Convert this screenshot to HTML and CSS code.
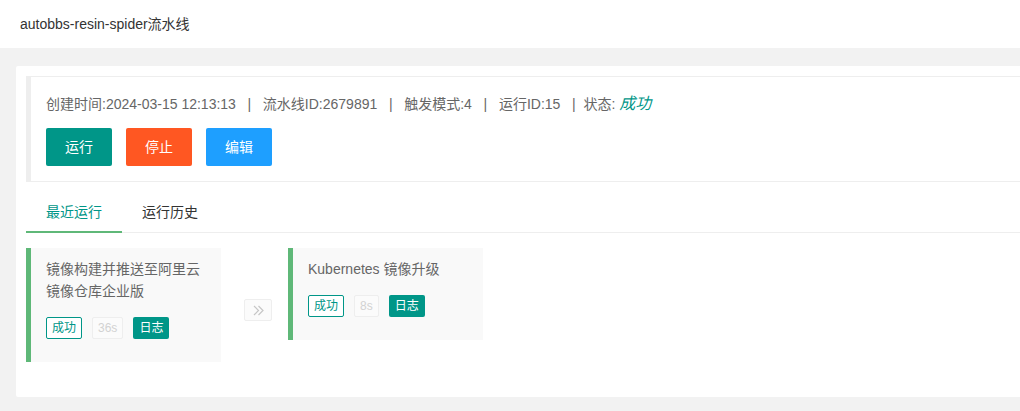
FILE: index.html
```html
<!DOCTYPE html>
<html lang="zh-CN">
<head>
<meta charset="utf-8">
<title>autobbs-resin-spider流水线</title>
<link rel="stylesheet" href="styles.css">
</head>
<body>
<div class="header">autobbs-resin-spider流水线</div>
<div class="main">
  <div class="card">
    <div class="quote">
      <div class="info">创建时间:2024-03-15 12:13:13&nbsp;&nbsp;&nbsp;|&nbsp;&nbsp;&nbsp;流水线ID:2679891&nbsp;&nbsp;&nbsp;|&nbsp;&nbsp;&nbsp;触发模式:4&nbsp;&nbsp;&nbsp;|&nbsp;&nbsp;&nbsp;运行ID:15&nbsp;&nbsp;&nbsp;|&nbsp;&nbsp;状态: <em class="status">成功</em></div>
      <div class="actions">
        <button class="btn btn-run">运行</button>
        <button class="btn btn-stop">停止</button>
        <button class="btn btn-edit">编辑</button>
      </div>
    </div>
    <div class="tab">
      <ul class="tab-title">
        <li class="active">最近运行</li>
        <li>运行历史</li>
      </ul>
      <div class="tab-content">
        <div class="stage">
          <div class="stage-name">镜像构建并推送至阿里云镜像仓库企业版</div>
          <div class="tags">
            <span class="tag tag-ok">成功</span>
            <span class="tag tag-time">36s</span>
            <span class="tag tag-log">日志</span>
          </div>
        </div>
        <div class="arrow">
          <svg width="11" height="11" viewBox="0 0 11 11"><polyline points="1,1 5.5,5.5 1,10" fill="none" stroke="#c6c6c6" stroke-width="1.2"/><polyline points="5.5,1 10,5.5 5.5,10" fill="none" stroke="#c6c6c6" stroke-width="1.2"/></svg>
        </div>
        <div class="stage">
          <div class="stage-name">Kubernetes 镜像升级</div>
          <div class="tags">
            <span class="tag tag-ok">成功</span>
            <span class="tag tag-time">8s</span>
            <span class="tag tag-log">日志</span>
          </div>
        </div>
      </div>
    </div>
  </div>
</div>
</body>
</html>
```
FILE: styles.css
```css
html, body {
  margin: 0;
  padding: 0;
  overflow: hidden;
  background: #f2f2f2;
}
body {
  font-family: "Liberation Sans", "Noto Sans CJK SC", sans-serif;
  font-size: 14px;
  color: #666;
}
.header {
  height: 48px;
  line-height: 48px;
  padding-left: 20px;
  background: #fff;
  color: #333;
}
.main {
  padding: 18px 0 14px 16px;
  overflow: hidden;
}
.card {
  background: #fff;
  border-radius: 2px;
  padding: 10px;
  margin-right: -40px;
}
.quote {
  border: 1px solid #eee;
  border-left-width: 5px;
  padding: 15px;
}
.info {
  line-height: 24px;
  margin-bottom: 12px;
  padding-top: 1px;
  margin-top: -1px;
  white-space: nowrap;
}
.status {
  color: #009688;
  font-size: 16px;
  font-style: italic;
}
.actions {
  display: flex;
  gap: 14px;
}
.btn {
  height: 38px;
  padding: 0 18px;
  border: 1px solid transparent;
  border-radius: 2px;
  color: #fff;
  font-family: inherit;
  font-size: 14px;
  line-height: 36px;
  cursor: pointer;
}
.btn-run { background: #009688; }
.btn-stop { background: #FF5722; }
.btn-edit { background: #1E9FFF; }
.tab {
  margin: 10px 0;
}
.tab-title {
  list-style: none;
  margin: 0;
  padding: 0;
  display: flex;
  height: 40px;
  border-bottom: 1px solid #eee;
}
.tab-title li {
  position: relative;
  padding: 0 20px;
  line-height: 41px;
  color: #333;
}
.tab-title li.active {
  color: #009688;
}
.tab-title li.active::after {
  content: "";
  position: absolute;
  left: 0;
  right: 0;
  bottom: -1px;
  height: 2px;
  background: #5FB878;
}
.tab-content {
  padding: 15px 0;
  display: flex;
  align-items: flex-start;
}
.stage {
  width: 195px;
  box-sizing: border-box;
  background: #f9f9f9;
  border-left: 5px solid #5FB878;
  padding: 10px 15px 23px 15px;
}
.stage-name {
  line-height: 22px;
  color: #666;
}
.tags {
  display: flex;
  gap: 10px;
  margin-top: 15px;
}
.tag {
  height: 20px;
  line-height: 20px;
  padding: 0 5px;
  border: 1px solid transparent;
  border-radius: 2px;
  font-size: 12px;
}
.tag-ok {
  border-color: #009688;
  color: #009688;
  background: #fff;
}
.tag-time {
  border-color: #eee;
  color: #d2d2d2;
  background: #fbfbfb;
}
.tag-log {
  background: #009688;
  color: #fff;
}
.arrow {
  width: 28px;
  height: 22px;
  box-sizing: border-box;
  border: 1px solid #eee;
  border-radius: 2px;
  background: #fbfbfb;
  margin: 51px 16px 0 23px;
  display: flex;
  align-items: center;
  justify-content: center;
}
.arrow svg { display: block; }
```
